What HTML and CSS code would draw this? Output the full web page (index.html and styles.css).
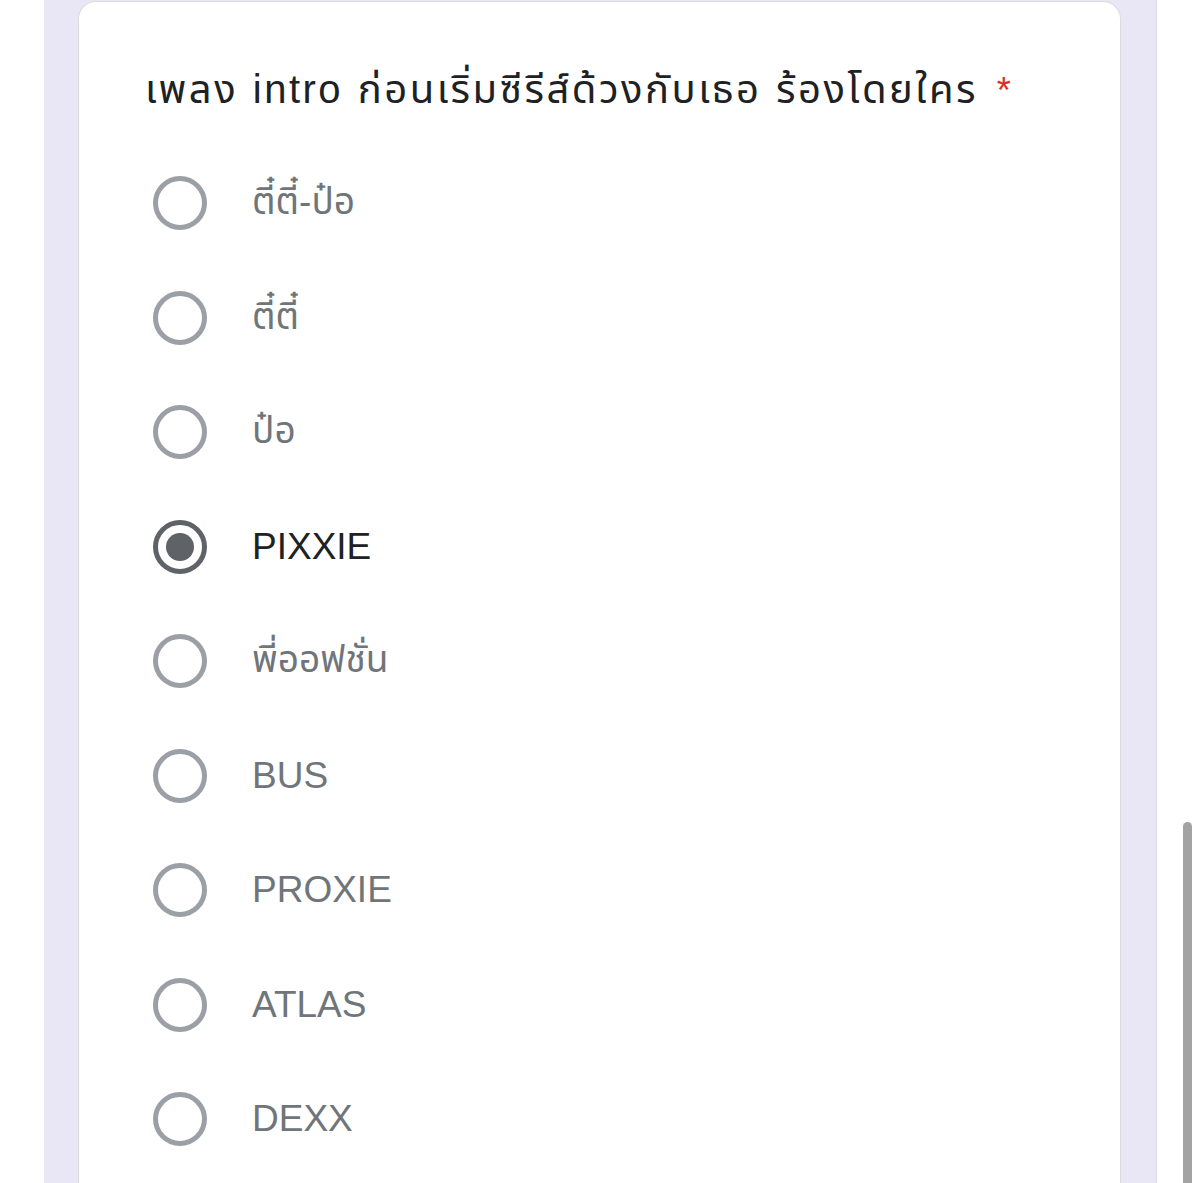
FILE: index.html
```html
<!DOCTYPE html>
<html lang="th">
<head>
    <meta charset="UTF-8">
    <meta name="viewport" content="width=device-width, initial-scale=1.0">
    <title>Form</title>
    <link rel="stylesheet" href="styles.css">
</head>
<body>
    <div class="page">
        <div class="card">
            <h2 class="question">เพลง intro ก่อนเริ่มซีรีส์ด้วงกับเธอ ร้องโดยใคร <span class="required">*</span></h2>

            <div class="options">
                <label class="option"><span class="radio"></span><span class="text">ตี๋ตี๋-ป๋อ</span></label>
                <label class="option"><span class="radio"></span><span class="text">ตี๋ตี๋</span></label>
                <label class="option"><span class="radio"></span><span class="text">ป๋อ</span></label>
                <label class="option checked"><span class="radio"></span><span class="text">PIXXIE</span></label>
                <label class="option"><span class="radio"></span><span class="text">พี่ออฟชั่น</span></label>
                <label class="option"><span class="radio"></span><span class="text">BUS</span></label>
                <label class="option"><span class="radio"></span><span class="text">PROXIE</span></label>
                <label class="option"><span class="radio"></span><span class="text">ATLAS</span></label>
                <label class="option"><span class="radio"></span><span class="text">DEXX</span></label>
            </div>
        </div>
    </div>

    <div class="scrollbar"></div>
</body>
</html>
```

FILE: styles.css
```css
/* Page */
html {
    background-color: white;
}

body {
    margin: 0;
    padding: 0;
    height: 1183px;
    overflow: hidden;
    font-family: "Liberation Sans", "Noto Sans Thai", "Noto Sans", sans-serif;
    color: #202124;
}

.page {
    margin-left: 44px;
    width: 1113px;
    height: 1183px;
    background-color: #e9e6f5;
    border-right: 1px solid #dcdbe6;
    box-sizing: border-box;
    padding: 1px 35px 0 34px;
}

/* Question card */
.card {
    background-color: white;
    border: 1px solid #dadce0;
    border-bottom: none;
    border-radius: 18px 18px 0 0;
    height: 1200px;
    padding: 57px 66px 0 66px;
    box-sizing: border-box;
}

.question {
    margin: 0;
    font-size: 40px;
    font-weight: normal;
    line-height: 60px;
    letter-spacing: 2.5px;
    word-spacing: 1px;
    color: #202124;
}

.required {
    color: #d93025;
    margin-left: 4px;
    font-size: 36px;
    letter-spacing: 0;
}

/* Options */
.options {
    display: flex;
    flex-direction: column;
    margin-top: 25px;
}

.option {
    display: flex;
    align-items: center;
    height: 114.5px;
    padding-left: 8px;
}

.radio {
    width: 54px;
    height: 54px;
    border: 5px solid #9aa0a6;
    border-radius: 50%;
    box-sizing: border-box;
    position: relative;
    flex-shrink: 0;
}

.option .text {
    margin-left: 45px;
    font-size: 37px;
    color: #70757a;
}

.option.checked .radio {
    border-color: #5f6368;
}

.option.checked .radio::after {
    content: "";
    position: absolute;
    left: 8px;
    top: 8px;
    width: 28px;
    height: 28px;
    border-radius: 50%;
    background-color: #5f6368;
}

.option.checked .text {
    color: #202124;
}

/* Overlay scrollbar */
.scrollbar {
    position: absolute;
    top: 822px;
    left: 1183px;
    width: 9px;
    height: 370px;
    border-radius: 5px;
    background-color: #a3a3a3;
}
```
